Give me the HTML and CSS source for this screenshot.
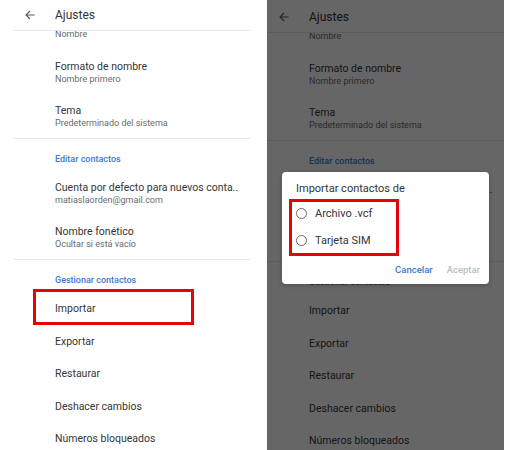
FILE: index.html
```html
<!DOCTYPE html>
<html lang="es">
<head>
<meta charset="utf-8">
<title>Ajustes</title>
<link rel="stylesheet" href="styles.css">
</head>
<body>
<div class="page">
  <section class="screen">
    <header class="appbar">
      <svg class="back" width="10" height="10" viewBox="0 0 10 10"><path d="M9.5 5H1M5 1L1 5l4 4" fill="none" stroke="#5a5a5a" stroke-width="1.1"/></svg>
      <span class="appbar-title">Ajustes</span>
    </header>
    <div class="partial">Nombre</div>
    <div class="item"><div class="primary">Formato de nombre</div><div class="secondary">Nombre primero</div></div>
    <div class="item item-last"><div class="primary">Tema</div><div class="secondary">Predeterminado del sistema</div></div>
    <div class="section-title">Editar contactos</div>
    <div class="item"><div class="primary">Cuenta por defecto para nuevos conta..</div><div class="secondary">matiaslaorden@gmail.com</div></div>
    <div class="item item-last"><div class="primary">Nombre fonético</div><div class="secondary">Ocultar si está vacío</div></div>
    <div class="section-title">Gestionar contactos</div>
    <div class="single marked">Importar</div>
    <div class="single">Exportar</div>
    <div class="single">Restaurar</div>
    <div class="single">Deshacer cambios</div>
    <div class="single">Números bloqueados</div>
  </section>

  <section class="screen screen-dim">
    <header class="appbar">
      <svg class="back" width="10" height="10" viewBox="0 0 10 10"><path d="M9.5 5H1M5 1L1 5l4 4" fill="none" stroke="#5a5a5a" stroke-width="1.1"/></svg>
      <span class="appbar-title">Ajustes</span>
    </header>
    <div class="partial">Nombre</div>
    <div class="item"><div class="primary">Formato de nombre</div><div class="secondary">Nombre primero</div></div>
    <div class="item item-last"><div class="primary">Tema</div><div class="secondary">Predeterminado del sistema</div></div>
    <div class="section-title">Editar contactos</div>
    <div class="item"><div class="primary">Cuenta por defecto para nuevos conta..</div><div class="secondary">matiaslaorden@gmail.com</div></div>
    <div class="item item-last"><div class="primary">Nombre fonético</div><div class="secondary">Ocultar si está vacío</div></div>
    <div class="section-title">Gestionar contactos</div>
    <div class="single">Importar</div>
    <div class="single">Exportar</div>
    <div class="single">Restaurar</div>
    <div class="single">Deshacer cambios</div>
    <div class="single">Números bloqueados</div>

    <div class="dialog">
      <div class="dialog-title">Importar contactos de</div>
      <div class="radio-list">
        <div class="radio-row"><span class="radio"></span><span>Archivo .vcf</span></div>
        <div class="radio-row"><span class="radio"></span><span>Tarjeta SIM</span></div>
      </div>
      <div class="dialog-actions">
        <span class="btn btn-primary">Cancelar</span>
        <span class="btn btn-disabled">Aceptar</span>
      </div>
    </div>
  </section>
</div>
</body>
</html>
```

FILE: styles.css
```css
html, body {
  margin: 0;
  padding: 0;
  background: #ffffff;
}
body {
  font-family: Roboto, "Liberation Sans", Arial, sans-serif;
  color: #353535;
}
.page {
  display: flex;
  width: 513px;
  height: 450px;
  overflow: hidden;
  padding-left: 13px;
  box-sizing: border-box;
  gap: 17px;
}
.screen {
  position: relative;
  width: 237px;
  height: 450px;
  background: #ffffff;
  flex: none;
}
.appbar {
  height: 30px;
  border-bottom: 1px solid #e9e9e9;
  display: flex;
  align-items: center;
  position: relative;
  z-index: 1;
}
.back {
  margin-left: 12px;
  margin-right: 20px;
}
.appbar-title {
  font-size: 12px;
  color: #333;
}
.partial {
  margin-top: -3px;
  padding: 0 0 9px 42px;
  font-size: 9px;
  line-height: 13px;
  color: #6b6b6b;
}
.item {
  padding: 10px 0 8px 42px;
}
.item-last {
  border-bottom: 1px solid #e9e9e9;
}
.primary {
  font-size: 10.5px;
  line-height: 13px;
  color: #353535;
  white-space: nowrap;
}
.secondary {
  font-size: 9px;
  line-height: 13px;
  color: #6b6b6b;
}
.section-title {
  padding: 14px 0 5px 42px;
  font-size: 9px;
  line-height: 13px;
  font-weight: 500;
  color: #3b78d8;
}
.single {
  position: relative;
  padding: 10px 0 9.5px 42px;
  font-size: 10.5px;
  line-height: 13px;
  color: #353535;
}
.marked::after {
  content: "";
  position: absolute;
  left: 20px;
  top: -3px;
  width: 161px;
  height: 36px;
  box-sizing: border-box;
  border: 3px solid #e8000b;
}
.screen-dim {
  padding-top: 2px;
  box-sizing: border-box;
}
.screen-dim::after {
  content: "";
  position: absolute;
  inset: 0;
  background: rgba(0, 0, 0, 0.6);
  z-index: 2;
}
.dialog {
  position: absolute;
  left: 15px;
  top: 172px;
  width: 207px;
  height: 112px;
  box-sizing: border-box;
  background: #ffffff;
  border-radius: 4px;
  z-index: 3;
  padding: 9.5px 9px 0 14px;
  box-shadow: 0 1px 4px rgba(0, 0, 0, 0.25);
}
.dialog-title {
  font-size: 11px;
  line-height: 13px;
  color: #333;
}
.radio-list {
  position: relative;
  margin-top: 5px;
}
.radio-list::after {
  content: "";
  position: absolute;
  left: -7px;
  top: -1px;
  width: 110px;
  height: 57px;
  box-sizing: border-box;
  border: 3px solid #e8000b;
}
.radio-row {
  height: 27px;
  display: flex;
  align-items: center;
  gap: 8px;
  font-size: 11px;
  color: #333;
}
.radio {
  width: 11px;
  height: 11px;
  box-sizing: border-box;
  border: 1.3px solid #6a6a6a;
  border-radius: 50%;
  flex: none;
}
.dialog-actions {
  margin-top: 9px;
  display: flex;
  justify-content: flex-end;
  gap: 14px;
  line-height: 13px;
}
.btn {
  font-size: 9.5px;
  font-weight: 500;
}
.btn-primary {
  color: #3b78d8;
}
.btn-disabled {
  color: #bdbdbd;
}
```
